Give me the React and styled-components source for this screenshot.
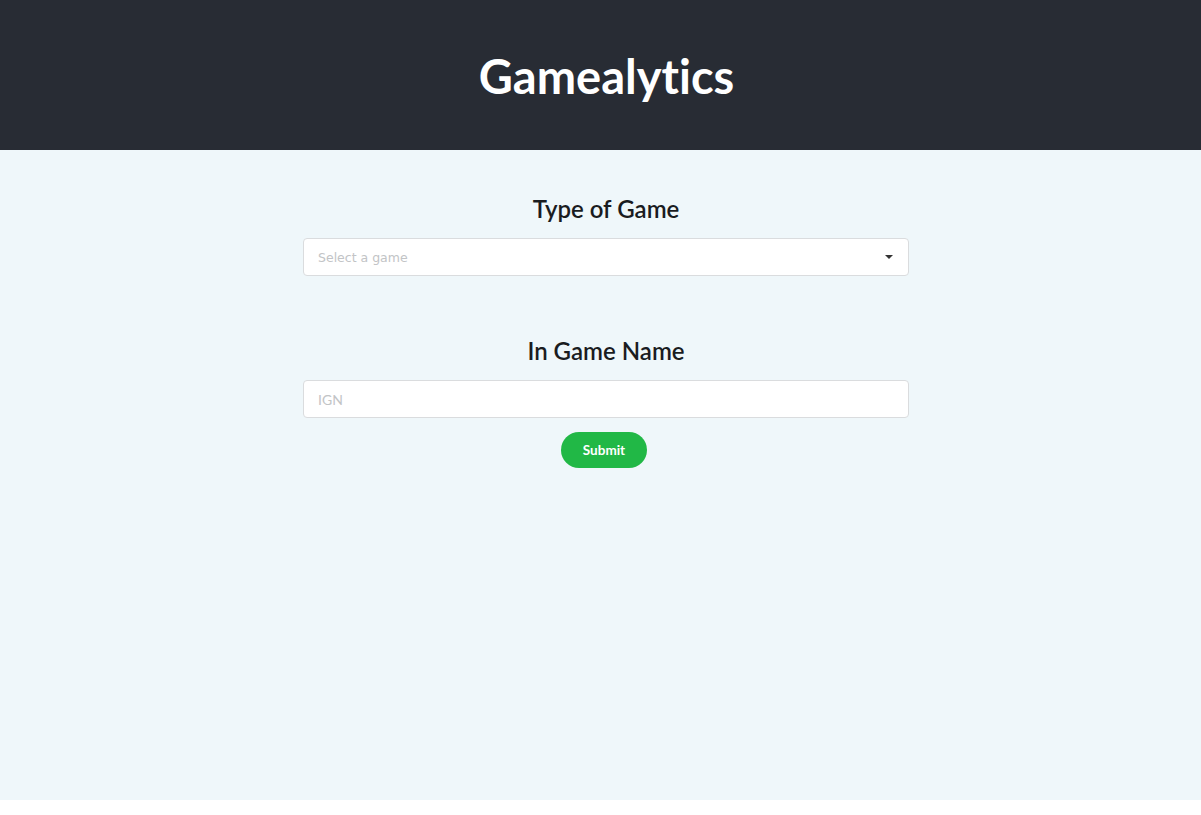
import React from 'react';
import styled, { createGlobalStyle } from 'styled-components';

const GlobalStyle = createGlobalStyle`
  body {
    margin: 0;
    background: #ffffff;
    font-family: Lato, 'Open Sans', sans-serif;
    font-variant-ligatures: none;
  }
`;

const Header = styled.header`
  height: 150px;
  background: #282c34;
  display: flex;
  align-items: center;
  justify-content: center;
  padding-left: 12px;
  box-sizing: border-box;
`;

const Title = styled.h1`
  margin: 0;
  color: #ffffff;
  font-family: Lato, sans-serif;
  font-weight: 700;
  font-size: 47px;
  line-height: 1;
  padding-top: 3px;
  font-variant-ligatures: none;
`;

const Main = styled.main`
  height: 650px;
  background: #eff7fa;
  padding-top: 44px;
  box-sizing: border-box;
`;

const Form = styled.form`
  width: 606px;
  margin-left: 303px;
  display: flex;
  flex-direction: column;
  align-items: center;
`;

const Section = styled.div`
  width: 100%;
  display: flex;
  flex-direction: column;
  align-items: center;
  margin-bottom: ${p => p.$gap || 0}px;
`;

const Label = styled.h2`
  margin: 0 0 14px;
  font-family: Lato, sans-serif;
  font-weight: 600;
  font-size: 24px;
  line-height: 30px;
  color: #1a1c1f;
`;

const Field = styled.div`
  position: relative;
  width: 100%;
  height: 38px;
  box-sizing: border-box;
  background: #ffffff;
  border: 1px solid #dadcde;
  border-radius: 4px;
  display: flex;
  align-items: center;
  padding: 0 14px;
`;

const Placeholder = styled.span`
  font-family: ${p => p.$alt ? "'DejaVu Sans', sans-serif" : 'Lato, sans-serif'};
  font-size: ${p => p.$alt ? '12.5px' : '14px'};
  color: #c2c4c6;
  flex: 1;
`;

const Caret = styled.span`
  width: 0;
  height: 0;
  border-left: 4px solid transparent;
  border-right: 4px solid transparent;
  border-top: 4px solid #333;
  margin-right: 1px;
`;

const Button = styled.button`
  margin-top: 14px;
  margin-right: 4px;
  width: 86px;
  height: 36px;
  border: none;
  border-radius: 18px;
  background: #21b846;
  color: #ffffff;
  font-family: Lato, sans-serif;
  font-weight: 700;
  font-size: 13.5px;
  cursor: pointer;
`;

const App = () => (
  <>
    <GlobalStyle />
    <Header>
      <Title>Gamealytics</Title>
    </Header>
    <Main>
      <Form onSubmit={e => e.preventDefault()}>
        <Section $gap={60}>
          <Label>Type of Game</Label>
          <Field>
            <Placeholder $alt>Select a game</Placeholder>
            <Caret />
          </Field>
        </Section>
        <Section>
          <Label>In Game Name</Label>
          <Field>
            <Placeholder>IGN</Placeholder>
          </Field>
        </Section>
        <Button type="submit">Submit</Button>
      </Form>
    </Main>
  </>
);

export default App;
